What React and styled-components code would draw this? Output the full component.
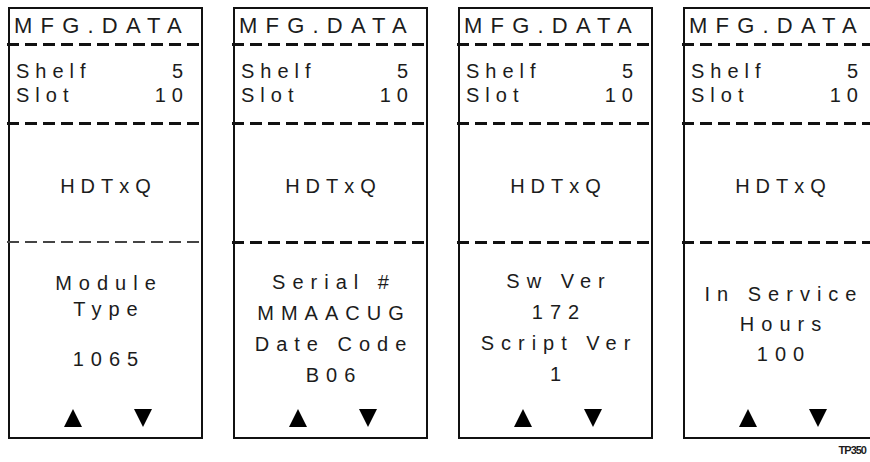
import React from "react";
import styled, { createGlobalStyle } from "styled-components";

const Global = createGlobalStyle`
  html, body { margin: 0; padding: 0; background: #fff; }
  body { font-family: "Liberation Sans", Arial, sans-serif; color: #1c1c1c; overflow: hidden; }
`;

const Page = styled.div`
  width: 870px;
  height: 462px;
  overflow: hidden;
  padding: 7px 0 0 8px;
  box-sizing: border-box;
  display: flex;
  flex-direction: column;
`;

const Row = styled.div`
  display: flex;
  gap: 30px;
`;

const Panel = styled.div`
  flex: 0 0 195px;
  height: 432px;
  box-sizing: border-box;
  border: 2px solid #111;
  display: flex;
  flex-direction: column;
`;

const Title = styled.div`
  height: 34px;
  line-height: 34px;
  padding-left: 4px;
  font-size: 22px;
  letter-spacing: 8.2px;
  white-space: nowrap;
`;

const Divider = styled.div`
  height: ${(p) => (p.$thin ? 2 : 3)}px;
  margin: 0 -3px;
  background: repeating-linear-gradient(
    to right,
    ${(p) => (p.$thin ? "#444" : "#111")} 0 12px,
    transparent 12px 18px
  );
`;

const Info = styled.div`
  height: 76px;
  box-sizing: border-box;
  padding: 13px 12px 0 6px;
  font-size: 20px;
  letter-spacing: 6px;
`;

const InfoRow = styled.div`
  display: flex;
  justify-content: space-between;
  line-height: 24px;
`;

const Model = styled.div`
  height: 116px;
  box-sizing: border-box;
  padding: 6px 0 0 6px;
  display: flex;
  align-items: center;
  justify-content: center;
  font-size: 20px;
  letter-spacing: 6px;
`;

const Body = styled.div`
  flex: 1;
  display: flex;
  flex-direction: column;
  padding-top: ${(p) => p.$pt}px;
`;

const Line = styled.div`
  text-align: center;
  font-size: 20px;
  letter-spacing: 7px;
  padding-left: 7px;
  white-space: nowrap;
  line-height: ${(p) => p.$lh}px;
  margin-top: ${(p) => p.$mt || 0}px;
`;

const Arrows = styled.div`
  margin-top: auto;
  padding: 0 0 9px 4px;
  display: flex;
  justify-content: center;
  gap: 50px;
`;

const Footer = styled.div`
  margin-top: 6px;
  padding-right: 4px;
  text-align: right;
  font-size: 11px;
  line-height: 11px;
  font-weight: 700;
  letter-spacing: -1px;
`;

const Up = () => (
  <svg width="20" height="20" viewBox="0 0 20 20">
    <polygon points="10,1 19,19 1,19" fill="#000" />
  </svg>
);
const Down = () => (
  <svg width="20" height="20" viewBox="0 0 20 20">
    <polygon points="1,1 19,1 10,19" fill="#000" />
  </svg>
);

const panels = [
  {
    pt: 27,
    lh: 26,
    thin: true,
    lines: [{ t: "Module" }, { t: "Type" }, { t: "1065", mt: 24 }],
  },
  {
    pt: 23,
    lh: 31,
    lines: [{ t: "Serial #" }, { t: "MMAACUG" }, { t: "Date Code" }, { t: "B06" }],
  },
  {
    pt: 22,
    lh: 31,
    lines: [{ t: "Sw Ver" }, { t: "172" }, { t: "Script Ver" }, { t: "1" }],
  },
  {
    pt: 35,
    lh: 30,
    lines: [{ t: "In Service" }, { t: "Hours" }, { t: "100" }],
  },
];

export default function App() {
  return (
    <>
      <Global />
      <Page>
        <Row>
          {panels.map((p, i) => (
            <Panel key={i}>
              <Title>MFG.DATA</Title>
              <Divider />
              <Info>
                <InfoRow>
                  <span>Shelf</span>
                  <span>5</span>
                </InfoRow>
                <InfoRow>
                  <span>Slot</span>
                  <span>10</span>
                </InfoRow>
              </Info>
              <Divider />
              <Model>HDTxQ</Model>
              <Divider $thin={p.thin} />
              <Body $pt={p.pt}>
                {p.lines.map((l, j) => (
                  <Line key={j} $lh={p.lh} $mt={l.mt}>
                    {l.t}
                  </Line>
                ))}
                <Arrows>
                  <Up />
                  <Down />
                </Arrows>
              </Body>
            </Panel>
          ))}
        </Row>
        <Footer>TP350</Footer>
      </Page>
    </>
  );
}
